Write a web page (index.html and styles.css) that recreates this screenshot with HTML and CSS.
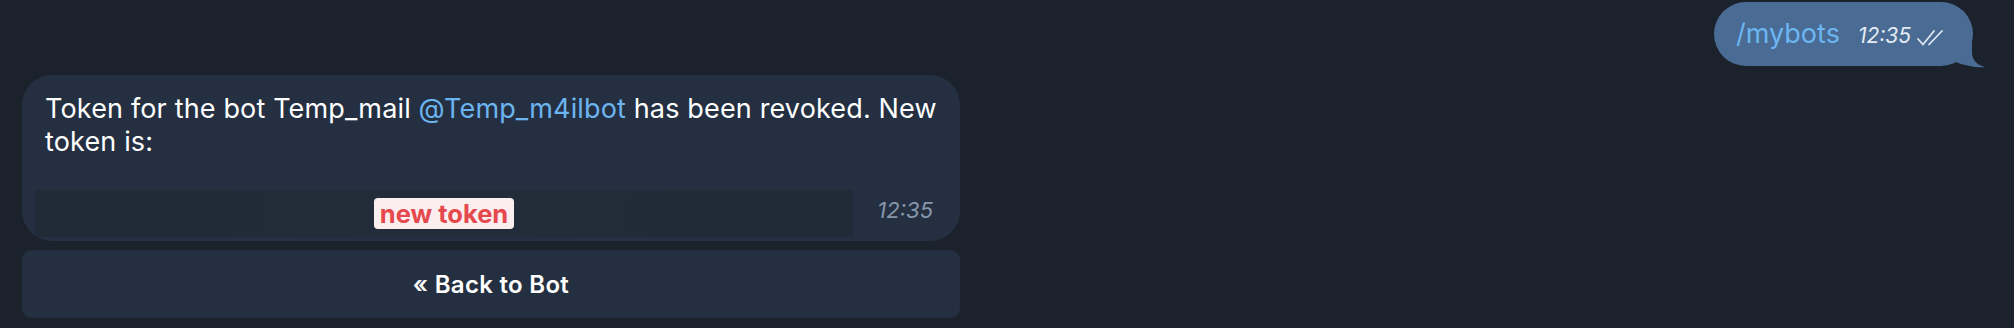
FILE: index.html
```html
<!DOCTYPE html>
<html lang="en">
<head>
    <meta charset="UTF-8">
    <meta name="viewport" content="width=device-width, initial-scale=1.0">
    <title>BotFather</title>
    <link rel="stylesheet" href="styles.css">
</head>
<body>
    <div class="chat">
        <div class="row-out">
            <div class="bubble-out">
                <span class="command">/mybots</span>
                <span class="meta-out">
                    <span class="time-out">12:35</span>
                    <svg class="checks" width="30" height="18" viewBox="0 0 30 18">
                        <path d="M1 10 L6 15.5 L17 2" fill="none" stroke="#dfe7f0" stroke-width="1.8" stroke-linecap="round" stroke-linejoin="round"/>
                        <path d="M12 15.5 L25 2" fill="none" stroke="#dfe7f0" stroke-width="1.8" stroke-linecap="round"/>
                    </svg>
                </span>
                <svg class="tail" width="46" height="31" viewBox="0 0 46 31">
                    <path d="M0 0 L32 0 L32 15 C32 23 37 28 45 30 C38 31 25 29 16 25 C11 27 5 28 0 28 Z" fill="#496b94"/>
                </svg>
            </div>
        </div>

        <div class="incoming">
            <div class="bubble-in">
                <p class="message">Token for the bot Temp_mail <span class="mention">@Temp_m4ilbot</span> has been revoked. New<br>token is:</p>
                <div class="token-row">
                    <div class="token-block">
                        <span class="token">new token</span>
                    </div>
                    <span class="time-in">12:35</span>
                </div>
            </div>
            <button class="inline-button">« Back to Bot</button>
        </div>
    </div>
</body>
</html>
```

FILE: styles.css
```css
body {
    margin: 0;
    background-color: #1c222b;
    font-family: Inter, "Noto Sans", sans-serif;
    color: #ffffff;
}
.chat {
    display: flex;
    flex-direction: column;
    padding: 2px 41px 0 22px;
}
.row-out {
    display: flex;
    justify-content: flex-end;
}
.bubble-out {
    position: relative;
    display: flex;
    align-items: baseline;
    height: 64px;
    padding: 0 26px 0 22px;
    box-sizing: border-box;
    background: #496b94;
    border-radius: 32px;
    line-height: 64px;
}
.command {
    font-size: 27px;
    color: #6cb6f2;
}
.meta-out {
    display: flex;
    align-items: center;
    gap: 6px;
    margin-left: 18px;
}
.time-out {
    font-size: 21px;
    font-style: italic;
    color: #e4ebf3;
}
.checks {
    margin-top: 3px;
}
.tail {
    position: absolute;
    right: -13px;
    bottom: -2px;
}
.incoming {
    display: flex;
    flex-direction: column;
    gap: 9px;
    width: 938px;
    margin-top: 9px;
}
.bubble-in {
    background: #243041;
    border-radius: 30px;
    padding: 17px 27px 4px 13px;
    overflow: hidden;
}
.message {
    margin: 0 -24px 32px 10px;
    font-size: 27px;
    letter-spacing: 0.15px;
    line-height: 33px;
    color: #ffffff;
}
.mention {
    color: #6cb4f0;
}
.token-row {
    display: flex;
    align-items: flex-end;
}
.token-block {
    width: 818px;
    height: 47px;
    display: flex;
    justify-content: center;
    align-items: center;
    background: linear-gradient(100deg, #212a37 0%, #222c3a 50%, #212a37 100%);
}
.token {
    background: #fbeeef;
    color: #e5484d;
    font-weight: 700;
    font-size: 25.5px;
    line-height: 31px;
    padding: 0 6px;
    border-radius: 4px;
}
.time-in {
    margin-left: auto;
    margin-bottom: 14px;
    font-size: 22px;
    font-style: italic;
    color: #8796aa;
}
.inline-button {
    height: 68px;
    border: none;
    border-radius: 10px;
    background: #243041;
    color: #ffffff;
    font-family: Inter, "Noto Sans", sans-serif;
    font-size: 24px;
    font-weight: 600;
    letter-spacing: 0.3px;
    cursor: pointer;
}
```
